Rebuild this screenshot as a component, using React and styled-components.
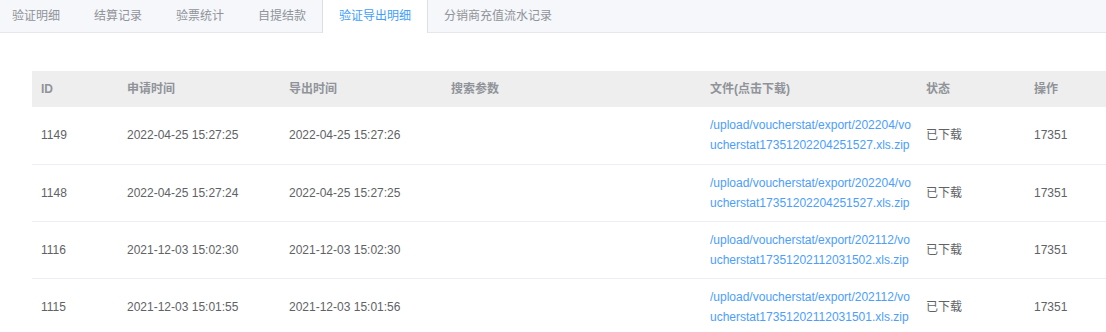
import React from 'react';
import styled, { createGlobalStyle } from 'styled-components';

const GlobalStyle = createGlobalStyle`
  body {
    margin: 0;
    background: #ffffff;
    font-family: 'Liberation Sans', 'Noto Sans CJK SC', sans-serif;
    font-size: 12px;
    overflow: hidden;
  }
`;

const Page = styled.div`
  width: 1106px;
`;

//  상단 탭 바
const TabBar = styled.div`
  display: flex;
  height: 33px;
  box-sizing: border-box;
  background: #f5f7fa;
  border-bottom: 1px solid #e4e7ed;
`;

const Tab = styled.div`
  height: ${props => (props.$active ? '33px' : '32px')};
  line-height: 32px;
  padding: 0 16px;
  box-sizing: border-box;
  color: ${props => (props.$active ? '#409eff' : '#909399')};
  background: ${props => (props.$active ? '#ffffff' : 'transparent')};
  border-left: 1px solid ${props => (props.$active ? '#dcdfe6' : 'transparent')};
  border-right: 1px solid ${props => (props.$active ? '#dcdfe6' : 'transparent')};
  margin-left: ${props => (props.$active ? '-1px' : '0')};
  margin-right: ${props => (props.$active ? '-1px' : '0')};
  white-space: nowrap;
  cursor: pointer;

  &:first-child {
    padding-left: 11px;
  }
`;

const TableWrap = styled.div`
  padding: 38px 0 0 32px;
`;

const Table = styled.table`
  border-collapse: collapse;
  table-layout: fixed;
  width: 1090px;
  color: #606266;
  font-size: 12px;
`;

const Th = styled.th`
  background: #eeeeee;
  color: #909399;
  font-weight: bold;
  text-align: left;
  padding: 8px 9px;
  line-height: 20px;
  height: 36px;
  box-sizing: border-box;
`;

const Td = styled.td`
  padding: 8px 9px;
  line-height: 20px;
  height: 57px;
  box-sizing: border-box;
  border-bottom: 1px solid #ebeef5;
  vertical-align: middle;
`;

const FileLink = styled.a`
  color: #4c9dff;
  text-decoration: none;
  word-break: break-all;
  display: block;
  width: 202px;
`;

const tabs = ['验证明细', '结算记录', '验票统计', '自提结款', '验证导出明细', '分销商充值流水记录'];

const columns = [
  { title: 'ID', width: 86 },
  { title: '申请时间', width: 162 },
  { title: '导出时间', width: 162 },
  { title: '搜索参数', width: 259 },
  { title: '文件(点击下载)', width: 216 },
  { title: '状态', width: 108 },
  { title: '操作', width: 97 },
];

const rows = [
  { id: 1149, apply: '2022-04-25 15:27:25', out: '2022-04-25 15:27:26', file: '/upload/voucherstat/export/202204/voucherstat17351202204251527.xls.zip' },
  { id: 1148, apply: '2022-04-25 15:27:24', out: '2022-04-25 15:27:25', file: '/upload/voucherstat/export/202204/voucherstat17351202204251527.xls.zip' },
  { id: 1116, apply: '2021-12-03 15:02:30', out: '2021-12-03 15:02:30', file: '/upload/voucherstat/export/202112/voucherstat17351202112031502.xls.zip' },
  { id: 1115, apply: '2021-12-03 15:01:55', out: '2021-12-03 15:01:56', file: '/upload/voucherstat/export/202112/voucherstat17351202112031501.xls.zip' },
];

export default function App() {
  return (
    <Page>
      <GlobalStyle />
      <TabBar>
        {tabs.map((name, i) => (
          <Tab key={name} $active={i === 4}>
            {name}
          </Tab>
        ))}
      </TabBar>
      <TableWrap>
        <Table>
          <colgroup>
            {columns.map(col => (
              <col key={col.title} style={{ width: col.width }} />
            ))}
          </colgroup>
          <thead>
            <tr>
              {columns.map(col => (
                <Th key={col.title}>{col.title}</Th>
              ))}
            </tr>
          </thead>
          <tbody>
            {rows.map(row => (
              <tr key={row.id}>
                <Td>{row.id}</Td>
                <Td>{row.apply}</Td>
                <Td>{row.out}</Td>
                <Td />
                <Td>
                  <FileLink href="#">{row.file}</FileLink>
                </Td>
                <Td>已下载</Td>
                <Td>17351</Td>
              </tr>
            ))}
          </tbody>
        </Table>
      </TableWrap>
    </Page>
  );
}
